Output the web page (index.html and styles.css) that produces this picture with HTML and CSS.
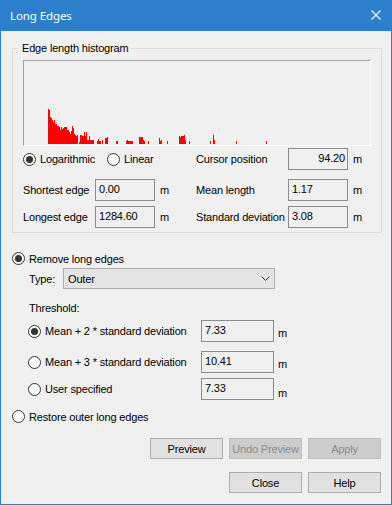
FILE: index.html
```html
<!DOCTYPE html>
<html lang="en">
<head>
  <meta charset="UTF-8">
  <title>Long Edges</title>
  <link rel="stylesheet" href="styles.css">
</head>
<body>

  <div class="window">
    <div class="titlebar">
      <span class="title">Long Edges</span>
      <svg class="close" width="10" height="10" viewBox="0 0 10 10">
        <path d="M0.5 0.5 L9.5 9.5 M9.5 0.5 L0.5 9.5" stroke="#fff" stroke-width="1.1" fill="none"/>
      </svg>
    </div>

    <div class="content">
      <fieldset class="group">
        <legend>Edge length histogram</legend>
        <div class="histogram">
          <svg width="346" height="83" viewBox="0 0 346 83" shape-rendering="crispEdges">
            <g fill="#ff0000">
              <rect x="24" y="48" width="1" height="35"/>
              <rect x="25" y="49" width="1" height="34"/>
              <rect x="26" y="56" width="1" height="27"/>
              <rect x="27" y="57" width="1" height="26"/>
              <rect x="28" y="59" width="1" height="24"/>
              <rect x="29" y="61" width="1" height="22"/>
              <rect x="30" y="59" width="1" height="24"/>
              <rect x="31" y="63" width="2" height="20"/>
              <rect x="33" y="65" width="2" height="18"/>
              <rect x="35" y="66" width="1" height="17"/>
              <rect x="36" y="69" width="1" height="14"/>
              <rect x="37" y="66" width="1" height="17"/>
              <rect x="38" y="68" width="1" height="15"/>
              <rect x="39" y="67" width="1" height="16"/>
              <rect x="40" y="66" width="3" height="17"/>
              <rect x="43" y="69" width="2" height="14"/>
              <rect x="45" y="71" width="1" height="12"/>
              <rect x="46" y="73" width="1" height="10"/>
              <rect x="47" y="70" width="1" height="13"/>
              <rect x="48" y="65" width="1" height="18"/>
              <rect x="49" y="67" width="1" height="16"/>
              <rect x="50" y="73" width="1" height="10"/>
              <rect x="51" y="74" width="1" height="9"/>
              <rect x="52" y="75" width="1" height="8"/>
              <rect x="53" y="74" width="1" height="9"/>
              <rect x="55" y="81" width="1" height="2"/>
              <rect x="56" y="74" width="2" height="9"/>
              <rect x="58" y="75" width="2" height="8"/>
              <rect x="60" y="71" width="1" height="12"/>
              <rect x="61" y="75" width="1" height="8"/>
              <rect x="62" y="71" width="1" height="12"/>
              <rect x="63" y="79" width="2" height="4"/>
              <rect x="65" y="75" width="1" height="8"/>
              <rect x="66" y="79" width="4" height="4"/>
              <rect x="73" y="80" width="1" height="3"/>
              <rect x="74" y="78" width="1" height="5"/>
              <rect x="75" y="80" width="2" height="3"/>
              <rect x="78" y="79" width="1" height="4"/>
              <rect x="81" y="77" width="2" height="6"/>
              <rect x="83" y="76" width="1" height="7"/>
              <rect x="92" y="80" width="2" height="3"/>
              <rect x="102" y="80" width="1" height="3"/>
              <rect x="103" y="79" width="1" height="4"/>
              <rect x="104" y="80" width="4" height="3"/>
              <rect x="108" y="80" width="1" height="3"/>
              <rect x="115" y="76" width="4" height="7"/>
              <rect x="119" y="79" width="1" height="4"/>
              <rect x="120" y="80" width="1" height="3"/>
              <rect x="124" y="80" width="1" height="3"/>
              <rect x="135" y="77" width="1" height="6"/>
              <rect x="136" y="80" width="1" height="3"/>
              <rect x="137" y="79" width="1" height="4"/>
              <rect x="143" y="80" width="1" height="3"/>
              <rect x="155" y="75" width="1" height="8"/>
              <rect x="156" y="76" width="1" height="7"/>
              <rect x="157" y="75" width="3" height="8"/>
              <rect x="160" y="74" width="1" height="9"/>
              <rect x="161" y="79" width="1" height="4"/>
              <rect x="165" y="80" width="1" height="3"/>
              <rect x="186" y="80" width="1" height="3"/>
              <rect x="189" y="74" width="1" height="9"/>
              <rect x="190" y="79" width="1" height="4"/>
              <rect x="212" y="80" width="1" height="3"/>
              <rect x="242" y="80" width="1" height="3"/>
            </g>
          </svg>
        </div>

        <div class="stats-row first">
          <div class="scale">
            <span class="radio checked log"><i></i>Logarithmic</span>
            <span class="radio"><i></i>Linear</span>
          </div>
          <span class="label wide">Cursor position</span>
          <div class="field value">94.20</div>
          <span class="unit">m</span>
        </div>

        <div class="stats-row second">
          <span class="label">Shortest edge</span>
          <div class="field">0.00</div>
          <span class="unit left">m</span>
          <span class="label wide">Mean length</span>
          <div class="field">1.17</div>
          <span class="unit">m</span>
        </div>

        <div class="stats-row third">
          <span class="label">Longest edge</span>
          <div class="field">1284.60</div>
          <span class="unit left">m</span>
          <span class="label wide">Standard deviation</span>
          <div class="field">3.08</div>
          <span class="unit">m</span>
        </div>
      </fieldset>

      <div class="radio checked main remove"><i></i>Remove long edges</div>

      <div class="type-row">
        <span class="type-label">Type:</span>
        <div class="combo">
          <span>Outer</span>
          <svg width="9" height="5" viewBox="0 0 9 5">
            <path d="M0.5 0.5 L4.5 4.5 L8.5 0.5" stroke="#333" stroke-width="1" fill="none"/>
          </svg>
        </div>
      </div>

      <div class="threshold-label">Threshold:</div>

      <div class="threshold-row first">
        <span class="radio checked"><i></i>Mean + 2 * standard deviation</span>
        <div class="field">7.33</div>
        <span class="unit">m</span>
      </div>
      <div class="threshold-row second">
        <span class="radio"><i></i>Mean + 3 * standard deviation</span>
        <div class="field">10.41</div>
        <span class="unit">m</span>
      </div>
      <div class="threshold-row third">
        <span class="radio"><i></i>User specified</span>
        <div class="field">7.33</div>
        <span class="unit low">m</span>
      </div>

      <div class="radio main restore"><i></i>Restore outer long edges</div>

      <div class="buttons top">
        <button>Preview</button>
        <button disabled>Undo Preview</button>
        <button disabled>Apply</button>
      </div>
      <div class="buttons bottom">
        <button>Close</button>
        <button>Help</button>
      </div>
    </div>
  </div>

</body>
</html>
```

FILE: styles.css
```css
body {
  margin: 0;
  background: #f0f0f0;
  font-family: 'Liberation Sans', Arial, sans-serif;
  font-size: 11px;
  letter-spacing: -0.17px;
  color: #000;
}

.window {
  width: 392px;
  height: 505px;
  box-sizing: border-box;
  border: 1px solid #2b7fcd;
  border-top: 0;
  background: #f0f0f0;
}

.titlebar {
  height: 31px;
  margin: 0 -1px;
  background: #2b7fcd;
  display: flex;
  align-items: center;
  justify-content: space-between;
  padding: 0 11px 0 10px;
}

.title {
  color: #fff;
  font-family: 'Noto Sans', 'Open Sans', sans-serif;
  font-size: 11.5px;
  letter-spacing: -0.1px;
  padding-bottom: 1px;
}

.close {
  display: block;
  margin-top: -1px;
}

.content {
  padding-top: 11px;
}

/* group box */
.group {
  margin: 0 9px 0 11px;
  padding: 5px 10px 4px;
  border: 1px solid #dcdcdc;
  min-width: 0;
}

.group legend {
  padding: 0 2px 0 4px;
  margin-left: -5px;
  line-height: 13px;
}

.histogram {
  height: 84px;
  border-top: 1px solid #a0a0a0;
  border-left: 1px solid #a0a0a0;
  border-right: 1px solid #fff;
  border-bottom: 1px solid #fff;
}

.histogram svg {
  display: block;
}

.stats-row {
  display: flex;
  align-items: center;
  height: 22px;
}

.stats-row.first {
  margin-top: 2px;
}

.stats-row.second {
  margin-top: 9px;
}

.stats-row.third {
  margin-top: 5px;
}

.scale {
  width: 173px;
  display: flex;
  align-items: center;
}

.label {
  width: 72px;
}

.label.wide {
  width: 92px;
}

.field {
  box-sizing: border-box;
  width: 60px;
  height: 22px;
  border: 1px solid #8c8c8c;
  background: #f0f0f0;
  padding: 2px 3px 0 3px;
  line-height: 15px;
}

.field.value {
  text-align: right;
  padding-right: 2px;
}

.unit {
  padding-left: 5px;
}

.unit.left {
  width: 41px;
  box-sizing: border-box;
}

/* radio buttons */
.radio {
  display: flex;
  align-items: center;
  height: 13px;
}

.radio i {
  box-sizing: border-box;
  width: 13px;
  height: 13px;
  border: 1px solid #333;
  border-radius: 50%;
  background: #fff;
  margin-right: 4px;
  display: flex;
  align-items: center;
  justify-content: center;
}

.radio.checked i::after {
  content: "";
  width: 7px;
  height: 7px;
  border-radius: 50%;
  background: #333;
}

.radio.log {
  width: 84px;
}

.radio.main {
  margin-left: 11px;
}

.remove {
  margin-top: 19px;
}

.restore {
  margin-top: 10px;
}

.type-row {
  display: flex;
  align-items: center;
  margin: 3px 0 0 28px;
}

.type-label {
  width: 34px;
}

.combo {
  box-sizing: border-box;
  width: 212px;
  height: 21px;
  border: 1px solid #adadad;
  background: #e5e5e5;
  display: flex;
  align-items: center;
  justify-content: space-between;
  padding: 0 4px 0 4px;
}

.combo svg {
  display: block;
}

.threshold-label {
  margin: 13px 0 0 28px;
  line-height: 13px;
}

.threshold-row {
  display: flex;
  align-items: center;
  height: 22px;
  padding-left: 27px;
}

.threshold-row.first {
  margin-top: 5px;
}

.threshold-row.second {
  margin-top: 9px;
}

.threshold-row.third {
  margin-top: 5px;
}

.threshold-row .radio {
  width: 173px;
}

.threshold-row .field {
  width: 73px;
}

.threshold-row .unit {
  padding-left: 4px;
  padding-top: 3px;
}

.threshold-row .unit.low {
  padding-top: 7px;
}

/* buttons */
.buttons {
  display: flex;
  justify-content: flex-end;
  gap: 6px;
  padding-right: 10px;
}

.buttons.top {
  margin-top: 15px;
}

.buttons.bottom {
  margin-top: 13px;
}

.buttons button {
  width: 73px;
  height: 21px;
  padding: 0;
  font-family: 'Liberation Sans', Arial, sans-serif;
  font-size: 11px;
  letter-spacing: -0.17px;
  color: #000;
  background: #e1e1e1;
  border: 1px solid #adadad;
  border-radius: 0;
}

.buttons button:disabled {
  background: #cccccc;
  border-color: #bfbfbf;
  color: #8d8d8d;
}
```
